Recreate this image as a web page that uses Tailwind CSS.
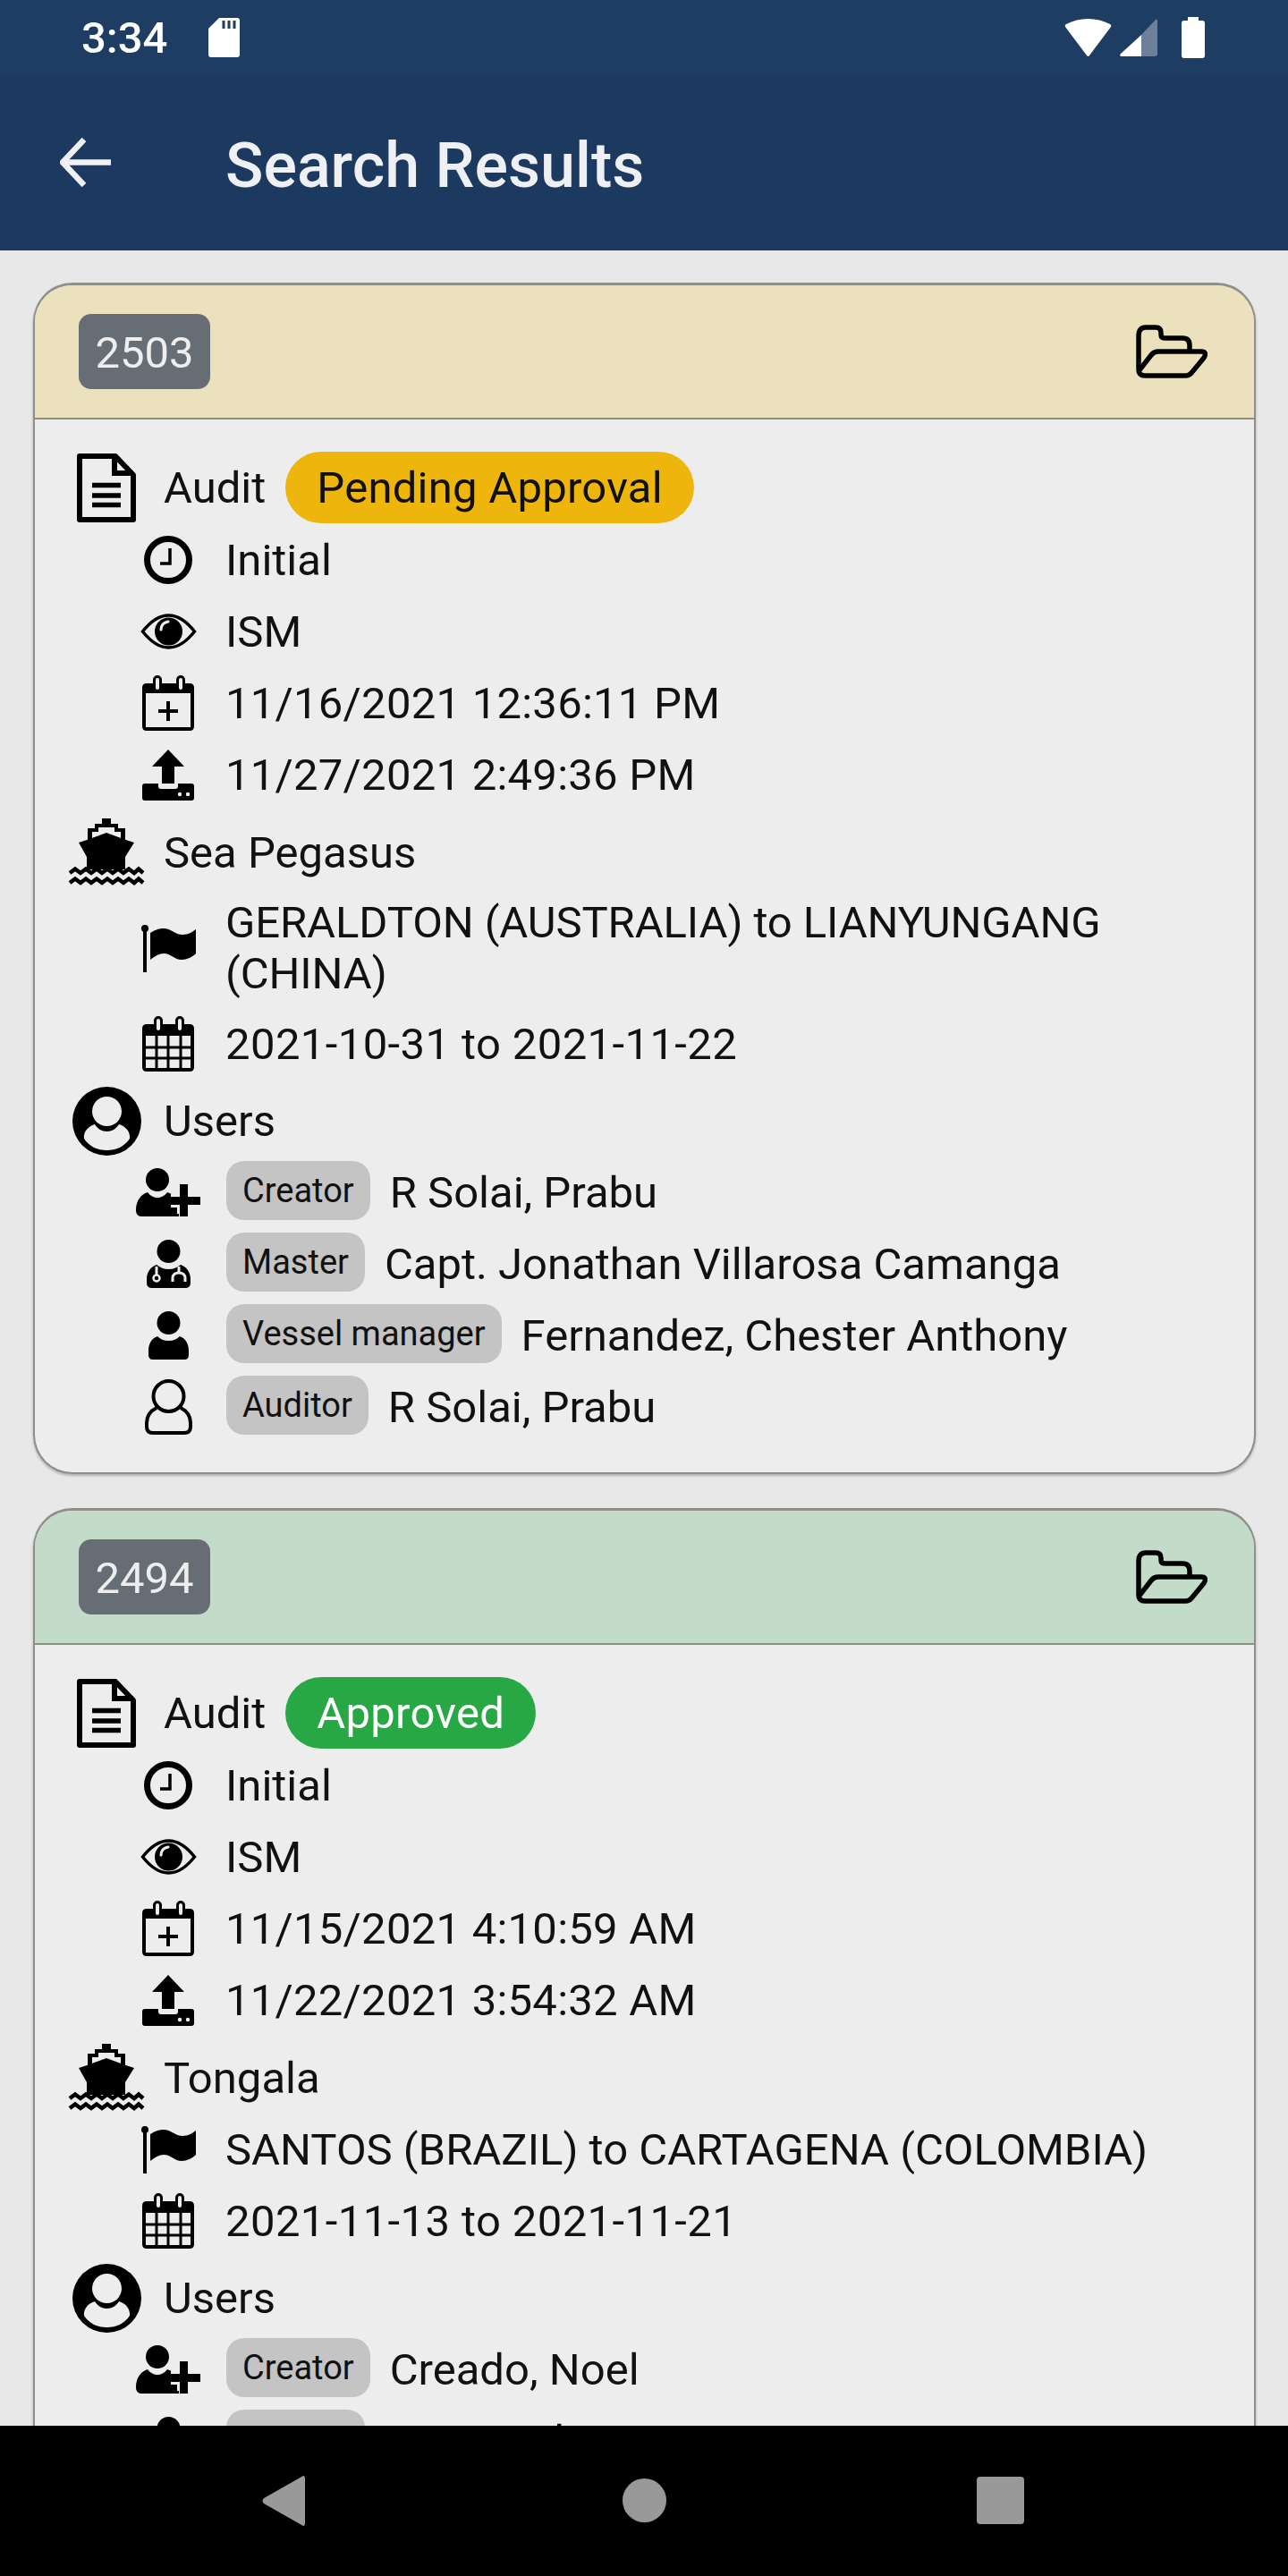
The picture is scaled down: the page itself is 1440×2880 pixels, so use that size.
<!DOCTYPE html>
<html lang="en">
<head>
    <meta charset="UTF-8">
    <meta name="viewport" content="width=device-width, initial-scale=1.0">
    <title>Search Results</title>
    <script src="https://cdn.jsdelivr.net/npm/@tailwindcss/browser@4"></script>
</head>
<body class="bg-[#e8e8e8] text-[#111111] font-['Roboto',sans-serif]">
    <!-- shared icons -->
    <svg class="hidden" xmlns="http://www.w3.org/2000/svg">
        <symbol id="i-folder" viewBox="0 0 82 60">
            <path d="M5 50V12Q5 3 13 3H24Q30 3 30 9V11Q30 15 34 15H54Q62 15 62 23V29" fill="none" stroke="#000" stroke-width="5.500"/>
            <path d="M5 50Q5 57 12 57H58Q61 57 64 54L78 37Q82 30 75 30H27Q22 30 19 34L5 52" fill="none" stroke="#000" stroke-width="5.500" stroke-linejoin="round"/>
        </symbol>
        <symbol id="i-doc" viewBox="0 0 66 77">
            <path d="M3 3H43L63 24V74H3Z" fill="none" stroke="#000" stroke-width="6" stroke-linejoin="round"/>
            <path d="M42 3V22H63" fill="none" stroke="#000" stroke-width="6"/>
            <path d="M17 35.500H49M17 47H49M17 57.500H49" stroke="#000" stroke-width="5.500"/>
        </symbol>
        <symbol id="i-clock" viewBox="0 0 54 54">
            <circle cx="27" cy="27" r="23.500" fill="none" stroke="#000" stroke-width="7"/>
            <path d="M29 14V31H18" fill="none" stroke="#000" stroke-width="3.500"/>
        </symbol>
        <symbol id="i-eye" viewBox="0 0 63 40">
            <path d="M2.500 20C12 8 22 2 31.500 2S51 8 60.500 20C51 32 41 38 31.500 38S12 32 2.500 20Z" fill="none" stroke="#000" stroke-width="3.500"/>
            <circle cx="31.500" cy="20" r="15.500" fill="#000"/>
            <path d="M23 18C23 13 26 10 31 9" fill="none" stroke="#ededed" stroke-width="3" stroke-linecap="round"/>
        </symbol>
        <symbol id="i-cal-plus" viewBox="0 0 58 62">
            <path d="M5 9H53Q58 9 58 14V57Q58 62 53 62H5Q0 62 0 57V14Q0 9 5 9ZM4 20V58H54V20Z" fill="#000" fill-rule="evenodd"/>
            <rect x="13.500" y="1.500" width="7" height="16" rx="3.500" fill="#ededed" stroke="#000" stroke-width="3"/>
            <rect x="39.500" y="1.500" width="7" height="16" rx="3.500" fill="#ededed" stroke="#000" stroke-width="3"/>
            <path d="M29 29V51M18 40H40" stroke="#000" stroke-width="4"/>
        </symbol>
        <symbol id="i-upload" viewBox="0 0 58 57">
            <path d="M29 0L47 19H36V38H22V19H11Z" fill="#000"/>
            <path d="M3 38H18V41Q18 44 21 44H37Q40 44 40 41V38H55Q58 38 58 41V54Q58 57 55 57H3Q0 57 0 54V41Q0 38 3 38Z" fill="#000"/>
            <circle cx="42" cy="50" r="2.200" fill="#ededed"/>
            <circle cx="51" cy="50" r="2.200" fill="#ededed"/>
        </symbol>
        <symbol id="i-ship" viewBox="0 0 86 77">
            <path d="M38 0H48V6H56V11H64V28H22V11H30V6H38Z" fill="#000"/>
            <path d="M27 22V15H34V10H52V15H59V22L43 16Z" fill="#ededed"/>
            <path d="M43 17L74 27L64 43V57H21V43L12 27Z" fill="#000"/>
            <path d="M2 61L8 56.500L14 61L20 56.500L26 61L32 56.500L38 61L44 56.500L50 61L56 56.500L62 61L68 56.500L74 61L79 56.500L84 61" fill="none" stroke="#000" stroke-width="4.500"/>
            <path d="M2 72L8 67.500L14 72L20 67.500L26 72L32 67.500L38 72L44 67.500L50 72L56 67.500L62 72L68 67.500L74 72L79 67.500L84 72" fill="none" stroke="#000" stroke-width="4.500"/>
        </symbol>
        <symbol id="i-flag" viewBox="0 0 61 54">
            <circle cx="4" cy="5" r="4" fill="#000"/>
            <path d="M4 6V54" stroke="#000" stroke-width="4"/>
            <path d="M10 10C16 6 21 5 25 5C33 5 38 12 46 12C52 12 57 9 61 6V33C57 37 51 40 45 40C37 40 33 33 25 33C20 33 15 36 10 40Z" fill="#000"/>
        </symbol>
        <symbol id="i-cal" viewBox="0 0 58 62">
            <path d="M5 9H53Q58 9 58 14V57Q58 62 53 62H5Q0 62 0 57V14Q0 9 5 9ZM4 22V58H54V22Z" fill="#000" fill-rule="evenodd"/>
            <rect x="14.500" y="1.500" width="7" height="16" rx="3.500" fill="#ededed" stroke="#000" stroke-width="3"/>
            <rect x="38.500" y="1.500" width="7" height="16" rx="3.500" fill="#ededed" stroke="#000" stroke-width="3"/>
            <path d="M16 22V58M29 22V58M43 22V58M4 35H54M4 47H54" stroke="#000" stroke-width="3"/>
        </symbol>
        <symbol id="i-users" viewBox="0 0 77 77">
            <circle cx="38.500" cy="38.500" r="38.500" fill="#000"/>
            <circle cx="38.500" cy="27.500" r="16.500" fill="#ededed"/>
            <path d="M13 58C12 50 18 44 25 42C28 47 33 50 38.500 50C44 50 49 47 52 42C59 44 65 50 64 58C58 67 49 71 38.500 71C28 71 19 67 13 58Z" fill="#ededed"/>
        </symbol>
        <symbol id="i-creator" viewBox="0 0 72 54">
            <circle cx="24" cy="13" r="13" fill="#000"/>
            <path d="M0 47C0 36 6 29 13 27C16 31 20 33 24 33C28 33 32 31 35 27C42 29 47 34 48 42V54H6C2 54 0 51 0 47Z" fill="#000"/>
            <path d="M53.500 21V51M39 36.500H69" stroke="#ededed" stroke-width="15"/>
            <path d="M53.500 18V54M36 36.500H72" stroke="#000" stroke-width="9"/>
        </symbol>
        <symbol id="i-master" viewBox="0 0 49 54">
            <circle cx="24.500" cy="13" r="13" fill="#000"/>
            <path d="M0 44C0 36 5 30 11 28C15 31 19 33 24.500 33C30 33 34 31 38 28C44 30 49 36 49 44V48Q49 54 43 54H6Q0 54 0 48Z" fill="#000"/>
            <path d="M11 30V39" stroke="#ededed" stroke-width="3"/>
            <circle cx="11" cy="43" r="3.500" fill="none" stroke="#ededed" stroke-width="2.500"/>
            <path d="M29 47V43C29 39 32 37 36 37C40 37 43 39 43 43V47" fill="none" stroke="#ededed" stroke-width="3"/>
            <path d="M36 30V37" stroke="#ededed" stroke-width="3"/>
        </symbol>
        <symbol id="i-manager" viewBox="0 0 45 54">
            <circle cx="22.500" cy="13" r="13" fill="#000"/>
            <path d="M0 44C0 36 4 30 10 28C13 31 17 33 22.500 33C28 33 32 31 35 28C41 30 45 36 45 44V49Q45 54 40 54H5Q0 54 0 49Z" fill="#000"/>
        </symbol>
        <symbol id="i-auditor" viewBox="0 0 53 62">
            <circle cx="26.500" cy="19" r="17" fill="none" stroke="#000" stroke-width="4"/>
            <path d="M13 32C7 35 2 41 2 49V53Q2 60 9 60H44Q51 60 51 53V49C51 41 46 35 40 32" fill="none" stroke="#000" stroke-width="4"/>
        </symbol>
    </svg>

    <div class="flex flex-col h-[2880px] overflow-hidden">
        <!-- status bar -->
        <div class="h-[84px] shrink-0 bg-[#1e3d63] flex items-center justify-between pl-[91px] pr-[93px]">
            <div class="flex items-center gap-[46px]">
                <span class="text-[49px] leading-none font-medium text-white">3:34</span>
                <svg class="w-[35px] h-[44px]" viewBox="0 0 35 44">
                    <path d="M12 0H32Q35 0 35 3V41Q35 44 32 44H3Q0 44 0 41V12Z" fill="#fff"/>
                    <path d="M17 3V12M23 3V12M29 3V12" stroke="#1e3d63" stroke-width="3"/>
                </svg>
            </div>
            <div class="flex items-center gap-[9px]">
                <svg class="w-[53px] h-[42px]" viewBox="0 0 53 42">
                    <path d="M1 9Q0 7 2 6C17 -2 36 -2 51 6Q53 7 52 9L28 41Q26.500 43 25 41Z" fill="#fff"/>
                </svg>
                <svg class="w-[42px] h-[42px]" viewBox="0 0 42 42">
                    <path d="M24 18L40 1Q42 0 42 2V39Q42 42 39 42H24Z" fill="#fff" opacity="0.35"/>
                    <path d="M24 18V42H2Q-1 42 1 39Z" fill="#fff"/>
                </svg>
                <svg class="w-[26px] h-[46px] ml-[18px]" viewBox="0 0 26 46">
                    <path d="M7 0H19V4H23Q26 4 26 7V43Q26 46 23 46H3Q0 46 0 43V7Q0 4 3 4H7Z" fill="#fff"/>
                </svg>
            </div>
        </div>

        <!-- toolbar -->
        <div class="h-[196px] shrink-0 bg-[#1c3a5f] flex items-center pl-[67px] pb-[2px]">
            <svg class="w-[57px] h-[55px]" viewBox="0 0 57 55">
                <path d="M27 2L3 27.500L27 53M4 27.500H57" fill="none" stroke="#eef0f3" stroke-width="6.500"/>
            </svg>
            <h1 class="ml-[128px] mt-[8px] text-[70px] leading-none font-medium text-[#eef0f3]">Search Results</h1>
        </div>

        <!-- results -->
        <main class="flex-1 min-h-0 overflow-hidden pl-[37px] pr-[36px] pt-[36px] flex flex-col gap-[38px]">
            <!-- card 2503 -->
            <section class="shrink-0 border-2 border-[#8f8f8a] border-t-[3px] rounded-[44px] bg-[#ededed] overflow-hidden shadow-[0_2px_3px_rgba(0,0,0,0.25)] pb-[33px]">
                <div class="h-[150px] bg-[#ebe2bd] border-b-2 border-[#8f8f8a] flex items-center justify-between pl-[49px] pr-[52px]">
                    <span class="h-[84px] w-[147px] pt-[3px] rounded-[14px] bg-[#666d75] text-[#eeeeee] text-[49px] flex items-center justify-center">2503</span>
                    <svg class="w-[82px] h-[60px]"><use href="#i-folder"/></svg>
                </div>
                <div class="pt-[36px] pl-[35px] text-[49px] leading-[57px]">
                    <div class="flex items-center h-[80px]">
                        <div class="w-[90px] mr-[19px] flex justify-center"><svg class="w-[66px] h-[77px]"><use href="#i-doc"/></svg></div>
                        <span>Audit</span>
                        <span class="ml-[22px] h-[80px] px-[35px] rounded-full bg-[#eeb50d] tracking-[0.25px] flex items-center">Pending Approval</span>
                    </div>
                    <div class="mt-[1px] flex items-center h-[80px] ml-[74px]">
                        <div class="w-[80px] mr-[24px] flex justify-center"><svg class="w-[54px] h-[54px]"><use href="#i-clock"/></svg></div>
                        <span>Initial</span>
                    </div>
                    <div class="flex items-center h-[80px] ml-[74px]">
                        <div class="w-[80px] mr-[24px] flex justify-center"><svg class="w-[63px] h-[40px]"><use href="#i-eye"/></svg></div>
                        <span>ISM</span>
                    </div>
                    <div class="flex items-center h-[80px] ml-[74px]">
                        <div class="w-[80px] mr-[24px] flex justify-center"><svg class="w-[58px] h-[62px]"><use href="#i-cal-plus"/></svg></div>
                        <span class="tracking-[0.25px]">11/16/2021 12:36:11 PM</span>
                    </div>
                    <div class="flex items-center h-[80px] ml-[74px]">
                        <div class="w-[80px] mr-[24px] flex justify-center"><svg class="w-[58px] h-[57px]"><use href="#i-upload"/></svg></div>
                        <span class="tracking-[0.25px]">11/27/2021 2:49:36 PM</span>
                    </div>
                    <div class="mt-[7px] flex items-center h-[80px]">
                        <div class="w-[90px] mr-[19px] flex justify-center"><svg class="w-[86px] h-[77px]"><use href="#i-ship"/></svg></div>
                        <span>Sea Pegasus</span>
                    </div>
                    <div class="flex items-center min-h-[80px] py-[10px] ml-[74px] pr-[100px]">
                        <div class="w-[80px] mr-[24px] shrink-0 flex justify-center"><svg class="w-[61px] h-[54px]"><use href="#i-flag"/></svg></div>
                        <span class="tracking-[-0.1px]">GERALDTON (AUSTRALIA) to LIANYUNGANG (CHINA)</span>
                    </div>
                    <div class="flex items-center h-[80px] ml-[74px]">
                        <div class="w-[80px] mr-[24px] flex justify-center"><svg class="w-[58px] h-[62px]"><use href="#i-cal"/></svg></div>
                        <span class="tracking-[0.4px]">2021-10-31 to 2021-11-22</span>
                    </div>
                    <div class="mt-[6px] flex items-center h-[80px]">
                        <div class="w-[90px] mr-[19px] flex justify-center"><svg class="w-[77px] h-[77px]"><use href="#i-users"/></svg></div>
                        <span>Users</span>
                    </div>
                    <div class="flex items-center h-[80px] ml-[74px]">
                        <div class="w-[80px] mr-[24px] flex justify-center"><svg class="w-[72px] h-[54px]"><use href="#i-creator"/></svg></div>
                        <span class="ml-px h-[66px] px-[18px] rounded-[20px] bg-[#c4c4c4] text-[38px] flex items-center -translate-y-[2px]">Creator</span>
                        <span class="ml-[22px]">R Solai, Prabu</span>
                    </div>
                    <div class="flex items-center h-[80px] ml-[74px]">
                        <div class="w-[80px] mr-[24px] flex justify-center"><svg class="w-[49px] h-[54px]"><use href="#i-master"/></svg></div>
                        <span class="ml-px h-[66px] px-[18px] rounded-[20px] bg-[#c4c4c4] text-[38px] flex items-center -translate-y-[2px]">Master</span>
                        <span class="ml-[22px]">Capt. Jonathan Villarosa Camanga</span>
                    </div>
                    <div class="flex items-center h-[80px] ml-[74px]">
                        <div class="w-[80px] mr-[24px] flex justify-center"><svg class="w-[45px] h-[54px]"><use href="#i-manager"/></svg></div>
                        <span class="ml-px h-[66px] px-[18px] rounded-[20px] bg-[#c4c4c4] text-[38px] flex items-center -translate-y-[2px]">Vessel manager</span>
                        <span class="ml-[22px]">Fernandez, Chester Anthony</span>
                    </div>
                    <div class="flex items-center h-[80px] ml-[74px]">
                        <div class="w-[80px] mr-[24px] flex justify-center"><svg class="w-[53px] h-[62px]"><use href="#i-auditor"/></svg></div>
                        <span class="ml-px h-[66px] px-[18px] rounded-[20px] bg-[#c4c4c4] text-[38px] flex items-center -translate-y-[2px]">Auditor</span>
                        <span class="ml-[22px]">R Solai, Prabu</span>
                    </div>
                </div>
            </section>

            <!-- card 2494 -->
            <section class="shrink-0 border-2 border-[#8f8f8a] border-t-[3px] rounded-[44px] bg-[#ededed] overflow-hidden shadow-[0_2px_3px_rgba(0,0,0,0.25)] pb-[33px]">
                <div class="h-[150px] bg-[#c3dbc9] border-b-2 border-[#8f8f8a] flex items-center justify-between pl-[49px] pr-[52px]">
                    <span class="h-[84px] w-[147px] pt-[3px] rounded-[14px] bg-[#666d75] text-[#eeeeee] text-[49px] flex items-center justify-center">2494</span>
                    <svg class="w-[82px] h-[60px]"><use href="#i-folder"/></svg>
                </div>
                <div class="pt-[36px] pl-[35px] text-[49px] leading-[57px]">
                    <div class="flex items-center h-[80px]">
                        <div class="w-[90px] mr-[19px] flex justify-center"><svg class="w-[66px] h-[77px]"><use href="#i-doc"/></svg></div>
                        <span>Audit</span>
                        <span class="ml-[22px] h-[80px] px-[35px] rounded-full bg-[#28a745] text-white tracking-[0.25px] flex items-center">Approved</span>
                    </div>
                    <div class="mt-[1px] flex items-center h-[80px] ml-[74px]">
                        <div class="w-[80px] mr-[24px] flex justify-center"><svg class="w-[54px] h-[54px]"><use href="#i-clock"/></svg></div>
                        <span>Initial</span>
                    </div>
                    <div class="flex items-center h-[80px] ml-[74px]">
                        <div class="w-[80px] mr-[24px] flex justify-center"><svg class="w-[63px] h-[40px]"><use href="#i-eye"/></svg></div>
                        <span>ISM</span>
                    </div>
                    <div class="flex items-center h-[80px] ml-[74px]">
                        <div class="w-[80px] mr-[24px] flex justify-center"><svg class="w-[58px] h-[62px]"><use href="#i-cal-plus"/></svg></div>
                        <span class="tracking-[0.25px]">11/15/2021 4:10:59 AM</span>
                    </div>
                    <div class="flex items-center h-[80px] ml-[74px]">
                        <div class="w-[80px] mr-[24px] flex justify-center"><svg class="w-[58px] h-[57px]"><use href="#i-upload"/></svg></div>
                        <span class="tracking-[0.25px]">11/22/2021 3:54:32 AM</span>
                    </div>
                    <div class="mt-[7px] flex items-center h-[80px]">
                        <div class="w-[90px] mr-[19px] flex justify-center"><svg class="w-[86px] h-[77px]"><use href="#i-ship"/></svg></div>
                        <span>Tongala</span>
                    </div>
                    <div class="flex items-center min-h-[80px] py-[10px] ml-[74px] pr-[100px]">
                        <div class="w-[80px] mr-[24px] shrink-0 flex justify-center"><svg class="w-[61px] h-[54px]"><use href="#i-flag"/></svg></div>
                        <span>SANTOS (BRAZIL) to CARTAGENA (COLOMBIA)</span>
                    </div>
                    <div class="flex items-center h-[80px] ml-[74px]">
                        <div class="w-[80px] mr-[24px] flex justify-center"><svg class="w-[58px] h-[62px]"><use href="#i-cal"/></svg></div>
                        <span class="tracking-[0.4px]">2021-11-13 to 2021-11-21</span>
                    </div>
                    <div class="mt-[6px] flex items-center h-[80px]">
                        <div class="w-[90px] mr-[19px] flex justify-center"><svg class="w-[77px] h-[77px]"><use href="#i-users"/></svg></div>
                        <span>Users</span>
                    </div>
                    <div class="flex items-center h-[80px] ml-[74px]">
                        <div class="w-[80px] mr-[24px] flex justify-center"><svg class="w-[72px] h-[54px]"><use href="#i-creator"/></svg></div>
                        <span class="ml-px h-[66px] px-[18px] rounded-[20px] bg-[#c4c4c4] text-[38px] flex items-center -translate-y-[2px]">Creator</span>
                        <span class="ml-[22px]">Creado, Noel</span>
                    </div>
                    <div class="flex items-center h-[80px] ml-[74px]">
                        <div class="w-[80px] mr-[24px] flex justify-center"><svg class="w-[49px] h-[54px]"><use href="#i-master"/></svg></div>
                        <span class="ml-px h-[66px] px-[18px] rounded-[20px] bg-[#c4c4c4] text-[38px] flex items-center -translate-y-[2px]">Master</span>
                        <span class="ml-[22px]">Capt Carlos C</span>
                    </div>
                </div>
            </section>
        </main>

        <!-- android nav bar -->
        <div class="h-[168px] shrink-0 bg-black flex items-center pl-[293px] pb-[1px]">
            <svg class="w-[48px] h-[56px]" viewBox="0 0 48 56">
                <path d="M46 0Q48 0 48 3V53Q48 56 46 56L2 31Q-1 28 2 25Z" fill="#999999"/>
            </svg>
            <div class="ml-[355px] w-[49px] h-[49px] rounded-full bg-[#999999]"></div>
            <div class="ml-[347px] w-[53px] h-[53px] rounded-[4px] bg-[#999999]"></div>
        </div>
    </div>
</body>
</html>
